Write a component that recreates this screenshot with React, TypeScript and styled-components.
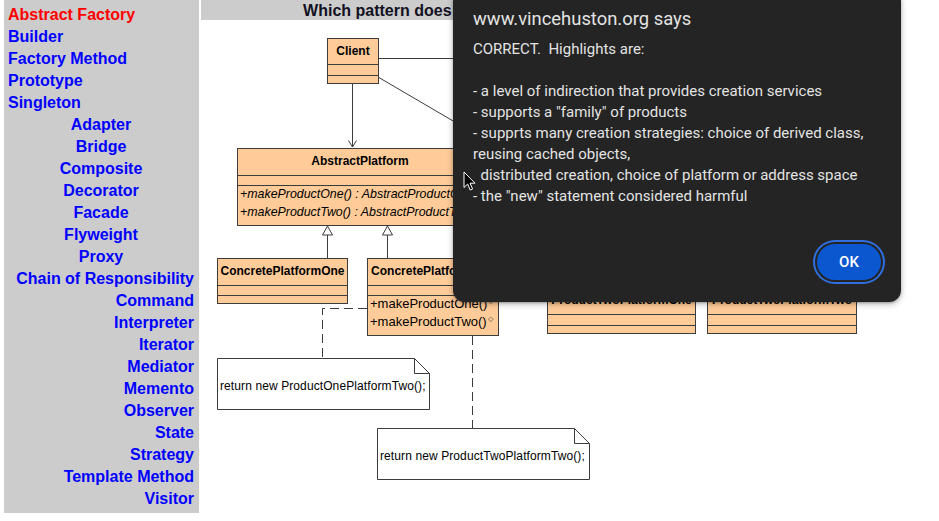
import React from "react";
import styled, { createGlobalStyle } from "styled-components";

const GlobalStyle = createGlobalStyle`
  * { box-sizing: border-box; }
  html, body { margin: 0; padding: 0; background: #fff; }
  body { font-family: "Liberation Sans", Arial, sans-serif; }
`;

const creational = ["Abstract Factory", "Builder", "Factory Method", "Prototype", "Singleton"];
const structural = ["Adapter", "Bridge", "Composite", "Decorator", "Facade", "Flyweight", "Proxy"];
const behavioral = [
  "Chain of Responsibility",
  "Command",
  "Interpreter",
  "Iterator",
  "Mediator",
  "Memento",
  "Observer",
  "State",
  "Strategy",
  "Template Method",
  "Visitor",
];

const message = `CORRECT.  Highlights are:

- a level of indirection that provides creation services
- supports a "family" of products
- supprts many creation strategies: choice of derived class,
reusing cached objects,
  distributed creation, choice of platform or address space
- the "new" statement considered harmful`;

const Page = styled.div`
  position: relative;
  width: 939px;
  height: 521px;
  overflow: hidden;
  display: flex;
  align-items: flex-start;
`;

const Sidebar = styled.nav`
  margin-left: 4px;
  width: 195px;
  height: 513px;
  background: #cccccc;
  padding: 4px 5px 0 4px;
  display: flex;
  flex-direction: column;
`;

const NavLink = styled.a<{ $align: "left" | "center" | "right"; $active?: boolean }>`
  display: block;
  text-align: ${(p) => p.$align};
  font-size: 16px;
  font-weight: bold;
  line-height: 22px;
  color: ${(p) => (p.$active ? "#ff0000" : "#0000ff")};
  text-decoration: none;
  white-space: nowrap;
  cursor: pointer;
`;

const Main = styled.main`
  margin-left: 2px;
  width: 660px;
  display: flex;
  flex-direction: column;
`;

const Header = styled.h1`
  margin: 0;
  height: 20px;
  background: #cccccc;
  font-size: 16px;
  line-height: 21px;
  font-weight: bold;
  color: #111122;
  text-align: center;
  white-space: nowrap;
`;

const Canvas = styled.div`
  position: relative;
  height: 501px;
`;

const Wires = styled.svg`
  position: absolute;
  left: 0;
  top: 0;
  width: 738px;
  height: 501px;
  overflow: visible;
`;

const Box = styled.div<{ $x: number; $y: number; $w: number }>`
  position: absolute;
  left: ${(p) => p.$x}px;
  top: ${(p) => p.$y}px;
  width: ${(p) => p.$w}px;
  background: #ffcc99;
  border: 1px solid #3c3c3c;
  color: #000;
  overflow: hidden;
`;

const BoxTitle = styled.div<{ $h?: number }>`
  height: ${(p) => p.$h ?? 26}px;
  padding-top: 5px;
  font-size: 12px;
  font-weight: bold;
  line-height: 14px;
  text-align: center;
  white-space: nowrap;
`;

const Compartment = styled.div<{ $h: number }>`
  height: ${(p) => p.$h}px;
  border-top: 1px solid #3c3c3c;
`;

const Methods = styled.div<{ $italic?: boolean }>`
  height: 40px;
  border-top: 1px solid #3c3c3c;
  padding: 0 2px;
  font-size: ${(p) => (p.$italic ? "12.4px" : "13px")};
  line-height: 18px;
  font-style: ${(p) => (p.$italic ? "italic" : "normal")};
  white-space: nowrap;
`;

const MethodLine = styled.div`
  height: 18px;
  margin-top: -1px;
  & + & {
    margin-top: 0;
  }
`;

const Mark = styled.span`
  display: inline-block;
  font-size: 7px;
  line-height: 7px;
  vertical-align: top;
  margin: 2px 0 0 1px;
  color: #333;
`;

const NoteShape = styled.div<{ $x: number; $y: number }>`
  position: absolute;
  left: ${(p) => p.$x}px;
  top: ${(p) => p.$y}px;
  width: 213px;
  height: 52px;
  padding: 3px 0 0 3px;
  display: flex;
  align-items: center;
  font-size: 12px;
  letter-spacing: 0.1px;
  color: #000;
  white-space: nowrap;
`;

const NoteOutline = styled.svg`
  position: absolute;
  left: 0;
  top: 0;
`;

const NoteText = styled.span`
  position: relative;
`;

const Dialog = styled.div`
  position: absolute;
  left: 453px;
  top: -10px;
  width: 448px;
  height: 312px;
  background: #242424;
  border-radius: 12px;
  box-shadow: 0 2px 6px rgba(0, 0, 0, 0.3), 0 1px 2px rgba(0, 0, 0, 0.2);
  padding: 17px 20px 22px 20px;
  display: flex;
  flex-direction: column;
  font-family: Roboto, "Noto Sans", sans-serif;
  color: #e3e3e3;
`;

const DialogTitle = styled.div`
  font-size: 18.4px;
  line-height: 24px;
`;

const DialogMessage = styled.div`
  margin-top: 8px;
  font-size: 15px;
  line-height: 21px;
  white-space: pre;
`;

const ButtonRow = styled.div`
  margin-top: auto;
  display: flex;
  justify-content: flex-end;
`;

const OkButton = styled.button`
  width: 64px;
  height: 36px;
  border: none;
  border-radius: 18px;
  background: #0b57d0;
  color: #ffffff;
  font-family: Roboto, "Noto Sans", sans-serif;
  font-size: 15px;
  font-weight: 500;
  box-shadow: 0 0 0 2px #242424, 0 0 0 4px #2f6fdf;
  cursor: pointer;
`;

const Cursor = styled.svg`
  position: absolute;
  left: 463px;
  top: 171px;
`;

type UmlProps = {
  x: number;
  y: number;
  w: number;
  title: string;
  titleH?: number;
  attrH?: number;
  footH?: number;
  methods?: React.ReactNode[];
  italic?: boolean;
};

const UmlClass = ({ x, y, w, title, titleH, attrH = 10, footH = 8, methods, italic }: UmlProps) => (
  <Box $x={x} $y={y} $w={w}>
    <BoxTitle $h={titleH}>{title}</BoxTitle>
    <Compartment $h={attrH} />
    {methods ? (
      <Methods $italic={italic}>
        {methods.map((m, i) => (
          <MethodLine key={i}>{m}</MethodLine>
        ))}
      </Methods>
    ) : (
      <Compartment $h={footH} />
    )}
  </Box>
);

const Note = ({ x, y, text }: { x: number; y: number; text: string }) => (
  <NoteShape $x={x} $y={y}>
    <NoteOutline width="213" height="52">
      <path d="M0.5 0.5 H197.5 L212.5 15.5 V51.5 H0.5 Z" fill="#fff" stroke="#3c3c3c" />
      <path d="M197.5 0.5 V15.5 H212.5" fill="none" stroke="#3c3c3c" />
    </NoteOutline>
    <NoteText>{text}</NoteText>
  </NoteShape>
);

const Generalization = ({ x }: { x: number }) => (
  <g>
    <path d={`M${x} 206 L${x - 5} 215 L${x + 5} 215 Z`} fill="#fff" stroke="#3c3c3c" />
    <line x1={x} y1={215} x2={x} y2={238} stroke="#3c3c3c" />
  </g>
);

export default function App() {
  return (
    <>
      <GlobalStyle />
      <Page>
        <Sidebar>
          {creational.map((n, i) => (
            <NavLink key={n} $align="left" $active={i === 0}>
              {n}
            </NavLink>
          ))}
          {structural.map((n) => (
            <NavLink key={n} $align="center">
              {n}
            </NavLink>
          ))}
          {behavioral.map((n) => (
            <NavLink key={n} $align="right">
              {n}
            </NavLink>
          ))}
        </Sidebar>

        <Main>
          <Header>Which pattern does this UML class diagram best represent?</Header>
          <Canvas>
            <Wires viewBox="0 0 738 501">
              <g stroke="#3c3c3c" strokeWidth="1" fill="none">
                <line x1="177" y1="38.5" x2="330" y2="38.5" />
                <line x1="177" y1="57" x2="300" y2="129" />
                <line x1="151.5" y1="64" x2="151.5" y2="127" />
                <path d="M147.5 120.5 L151.5 127 L155.5 120.5" />
                <path d="M166 288.5 H121.5 V338" strokeDasharray="9 5" />
                <path d="M271.5 316 V408" strokeDasharray="9 5" />
              </g>
              <Generalization x={126.5} />
              <Generalization x={186.5} />
            </Wires>

            <UmlClass x={126} y={18} w={52} title="Client" titleH={25} attrH={11} />
            <UmlClass
              x={36}
              y={128}
              w={246}
              title="AbstractPlatform"
              italic
              methods={[
                "+makeProductOne() : AbstractProductOne",
                "+makeProductTwo() : AbstractProductTwo",
              ]}
            />
            <UmlClass x={16} y={238} w={131} title="ConcretePlatformOne" />
            <UmlClass
              x={166}
              y={238}
              w={132}
              title="ConcretePlatformTwo"
              methods={[
                <>
                  +makeProductOne()<Mark>◇</Mark>
                </>,
                <>
                  +makeProductTwo()<Mark>◇</Mark>
                </>,
              ]}
            />
            <UmlClass x={346} y={267} w={149} title="ProductTwoPlatformOne" attrH={11} />
            <UmlClass x={506} y={267} w={150} title="ProductTwoPlatformTwo" attrH={11} />

            <Note x={16} y={338} text="return new ProductOnePlatformTwo();" />
            <Note x={176} y={408} text="return new ProductTwoPlatformTwo();" />
          </Canvas>
        </Main>

        <Dialog role="alertdialog">
          <DialogTitle>www.vincehuston.org says</DialogTitle>
          <DialogMessage>{message}</DialogMessage>
          <ButtonRow>
            <OkButton>OK</OkButton>
          </ButtonRow>
        </Dialog>

        <Cursor width="14" height="21" viewBox="0 0 14 21">
          <path
            d="M1 1 L1 16.5 L4.6 13 L7.2 19 L9.6 18 L7 12.2 L12 12.2 Z"
            fill="#000"
            stroke="#fff"
            strokeWidth="1"
            strokeLinejoin="round"
          />
        </Cursor>
      </Page>
    </>
  );
}
